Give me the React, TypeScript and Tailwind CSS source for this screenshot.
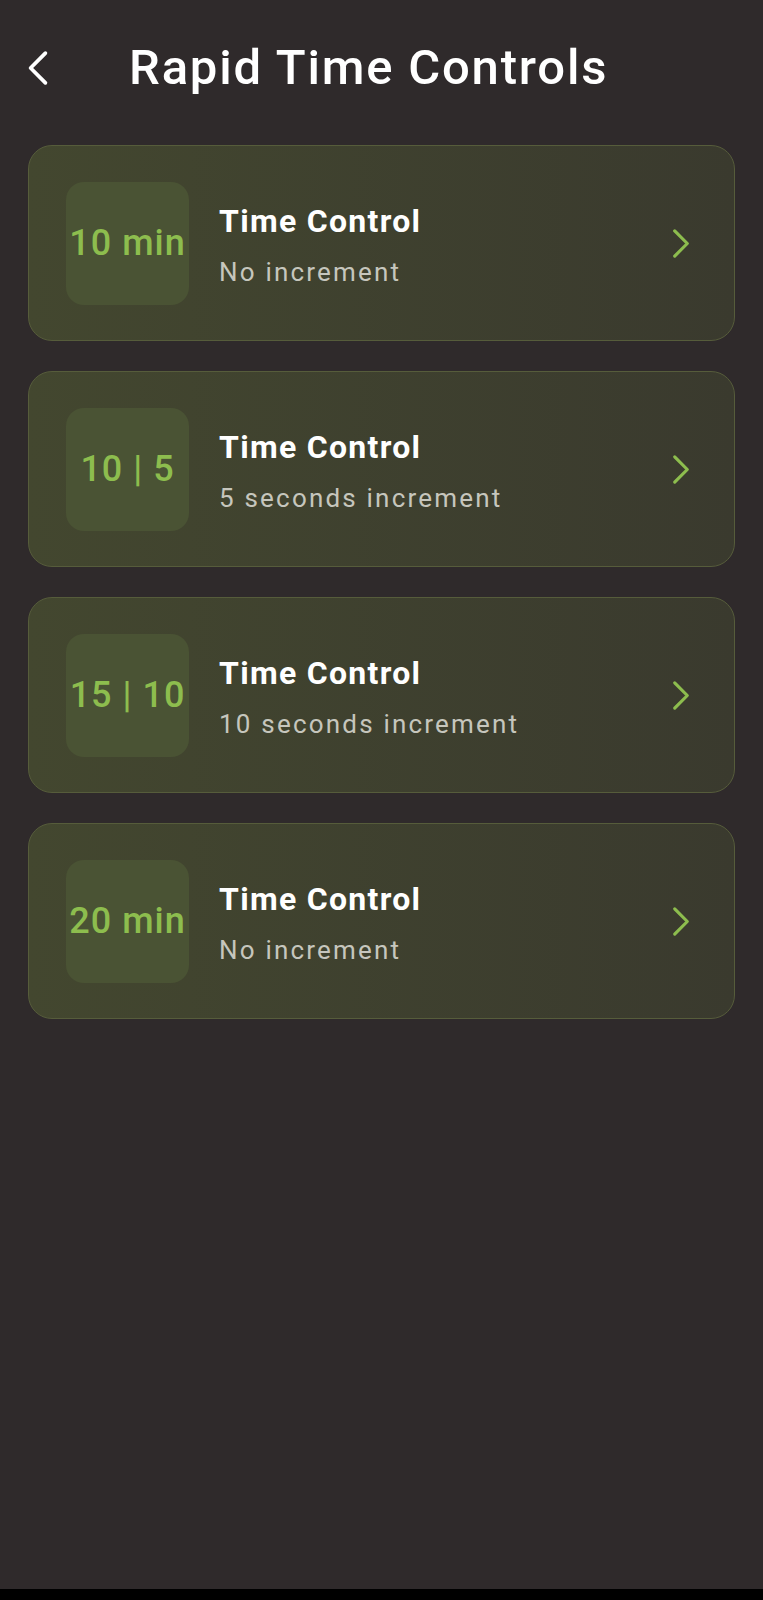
const controls = [
  { label: "10 min", sub: "No increment" },
  { label: "10 | 5", sub: "5 seconds increment" },
  { label: "15 | 10", sub: "10 seconds increment" },
  { label: "20 min", sub: "No increment" },
];

function Chevron({ dir, className }: { dir: "left" | "right"; className?: string }) {
  return (
    <svg viewBox="0 0 20 34" className={className} fill="none">
      <polyline
        points={dir === "right" ? "3,3 17,17 3,31" : "17,3 3,17 17,31"}
        stroke="currentColor"
        strokeWidth={3.5}
        strokeLinecap="round"
        strokeLinejoin="round"
      />
    </svg>
  );
}

export default function App() {
  return (
    <div className="flex flex-col h-[1600px] bg-[#2f2a2b] font-['Roboto',sans-serif]">
      <main className="flex-1 pt-[40px]">
        {/* Header */}
        <header className="flex items-center h-[56px] pl-[27px]">
          <Chevron dir="left" className="w-[22px] h-[36px] text-white" />
          <h1 className="ml-[80px] text-[49px] leading-[56px] font-medium text-white tracking-[1.8px]">
            Rapid Time Controls
          </h1>
        </header>

        {/* Options */}
        <div className="mt-[49px] px-[28px] flex flex-col gap-[30px]">
          {controls.map((c, i) => (
            <button
              key={i}
              className="flex items-center h-[196px] pl-[37px] pr-[44px] rounded-[24px] border-[1.5px] border-[#565c3b] bg-gradient-to-r from-[#43472f] to-[#3a3a2e] text-left"
            >
              <div className="w-[123px] h-[123px] shrink-0 rounded-[18px] bg-[#4a5334] flex items-center justify-center">
                <span className="whitespace-nowrap text-[36px] font-medium text-[#8dbd4e] tracking-[1px]">{c.label}</span>
              </div>
              <div className="flex-1 ml-[30px] pt-[4px]">
                <div className="text-[32px] leading-[40px] font-bold text-white tracking-[1.3px]">Time Control</div>
                <div className="mt-[14px] text-[26px] leading-[34px] text-[#c6c6bd] tracking-[2.2px]">{c.sub}</div>
              </div>
              <Chevron dir="right" className="w-[18px] h-[31px] text-[#8dbd4e]" />
            </button>
          ))}
        </div>
      </main>
      <div className="h-[11px] bg-black" />
    </div>
  );
}
